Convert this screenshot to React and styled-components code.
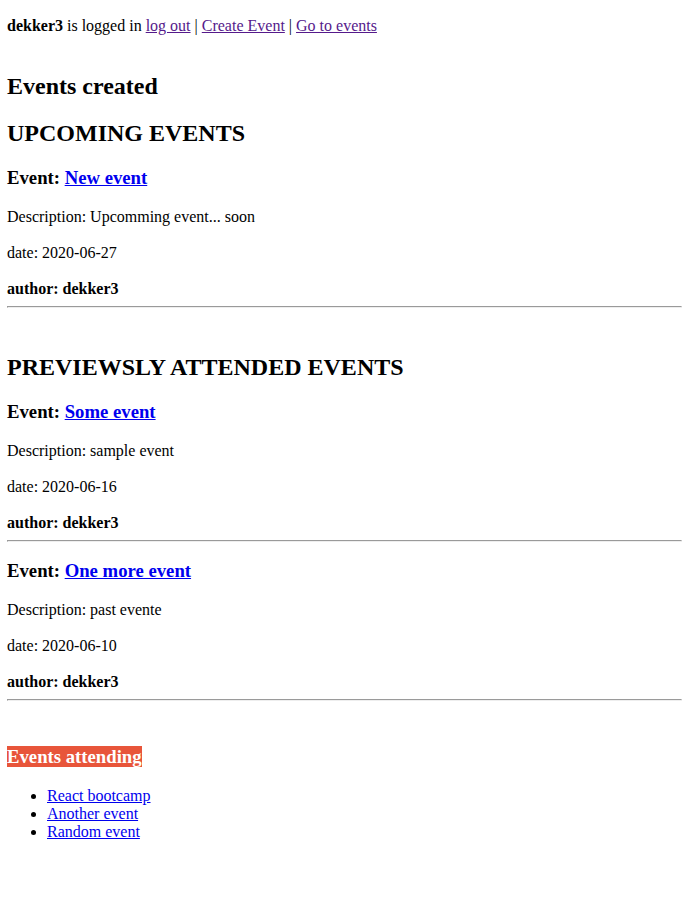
import React from "react";
import styled, {createGlobalStyle} from "styled-components";

const GlobalStyle = createGlobalStyle`
    body {
        margin: 0;
        background: #fff;
        color: #000;
        font-family: "Liberation Serif", "Times New Roman", serif;
        font-size: 16px;
    }
`;

const upcoming = [
    {title: "New event", description: "Upcomming event... soon", date: "2020-06-27", author: "dekker3"},
];

const past = [
    {title: "Some event", description: "sample event", date: "2020-06-16", author: "dekker3"},
    {title: "One more event", description: "past evente", date: "2020-06-10", author: "dekker3"},
];

const attending = ["React bootcamp", "Another event", "Random event"];

const EventItem = ({event}) => (
    <article>
        <EventTitle>Event: <Link href="#">{event.title}</Link></EventTitle>
        <Text>Description: {event.description}</Text>
        <Text>date: {event.date}</Text>
        <Author>author: {event.author}</Author>
        <Rule/>
    </article>
);

const App = () => {
    return (
        <Page>
            <GlobalStyle/>
            <Nav>
                <b>dekker3</b> is logged in <Link href="#" $visited>log out</Link> | <Link href="#" $visited>Create Event</Link> | <Link href="#" $visited>Go to events</Link>
            </Nav>
            <Spacer/>

            <SectionTitle>Events created</SectionTitle>
            <SectionTitle>UPCOMING EVENTS</SectionTitle>
            {upcoming.map(e => <EventItem key={e.title} event={e}/>)}
            <Spacer/>

            <SectionTitle>PREVIEWSLY ATTENDED EVENTS</SectionTitle>
            {past.map(e => <EventItem key={e.title} event={e}/>)}
            <Spacer/>

            <EventTitle><Badge>Events attending</Badge></EventTitle>
            <List>
                {attending.map(name => (
                    <li key={name}><Link href="#">{name}</Link></li>
                ))}
            </List>
        </Page>
    );
};

export default App;

const Page = styled.div`
    padding: 17px 0 0 7px;
`;

const Nav = styled.div`
    line-height: normal;
`;

const Spacer = styled.div`
    height: 18.4px;
`;

const Link = styled.a`
    color: ${props => props.$visited ? "#551a8b" : "#0000ee"};
    text-decoration: underline;
`;

const SectionTitle = styled.h2`
    font-size: 24px;
    font-weight: bold;
    margin: 19.92px 0;
`;

const EventTitle = styled.h3`
    font-size: 18.72px;
    font-weight: bold;
    margin: 18.72px 0;
`;

const Text = styled.p`
    margin: 18px 0;
`;

const Author = styled.div`
    font-weight: bold;
`;

const Rule = styled.hr`
    margin: 8px 0;
    border-style: inset;
    border-width: 1px;
    color: gray;
`;

const Badge = styled.span`
    background: #e8553a;
    color: #fff;
`;

const List = styled.ul`
    margin: 16px 0;
    padding-left: 40px;
`;
